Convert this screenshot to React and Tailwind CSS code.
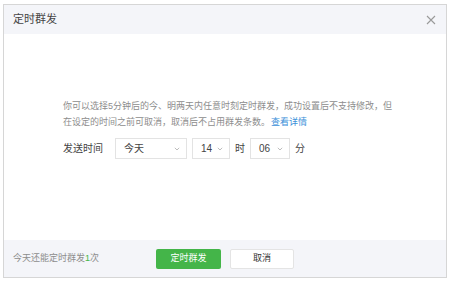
import React from 'react'

function Chevron() {
  return (
    <svg width="6" height="4" viewBox="0 0 6 4" className="shrink-0">
      <path d="M0.8 0.8 L3 3 L5.2 0.8" fill="none" stroke="#b5b5b5" strokeWidth="0.9" />
    </svg>
  )
}

function Select({ value, width }) {
  return (
    <div
      className={`flex h-[21px] items-center justify-between border border-[#e3e3e3] bg-white pl-[8px] pr-[6px] text-[10px] text-[#444] ${width}`}
    >
      <span>{value}</span>
      <Chevron />
    </div>
  )
}

export default function App() {
  return (
    <div
      className="h-[281px] w-[450px] bg-white pl-[3px] pt-[4px]"
      style={{ fontFamily: '"Liberation Sans","Noto Sans CJK SC",sans-serif' }}
    >
      <div className="flex h-[274px] w-[444px] flex-col border border-[#d6d6d6] bg-white">
        <div className="flex h-[29px] items-center justify-between bg-[#f4f5f9] pl-[9px] pr-[10px]">
          <span className="text-[11px] text-[#444]">定时群发</span>
          <svg width="10" height="10" viewBox="0 0 10 10">
            <path d="M1 1 L9 9 M9 1 L1 9" stroke="#9a9a9a" strokeWidth="1.1" />
          </svg>
        </div>

        <div className="flex-1 pl-[59px] pr-[50px] pt-[64px]">
          <p className="text-[9px] leading-[16px] text-[#8d8d8d]">
            你可以选择5分钟后的今、明两天内任意时刻定时群发，成功设置后不支持修改，但在设定的时间之前可取消，取消后不占用群发条数。
            <a className="ml-[1px] inline-block text-[#3b8fd9]">查看详情</a>
          </p>
          <div className="mt-[8px] flex items-center text-[10px] text-[#444]">
            <span className="w-[52px]">发送时间</span>
            <Select value="今天" width="w-[72px]" />
            <div className="ml-[5px]">
              <Select value="14" width="w-[38px]" />
            </div>
            <span className="mx-[5px]">时</span>
            <Select value="06" width="w-[40px]" />
            <span className="ml-[5px]">分</span>
          </div>
        </div>

        <div className="flex h-[37px] items-center bg-[#f4f5f9] pl-[9px]">
          <span className="w-[143px] text-[9px] text-[#8d8d8d]">
            今天还能定时群发<span className="text-[#44b549]">1</span>次
          </span>
          <button className="h-[20px] w-[65px] rounded-[2px] bg-[#44b549] text-[9px] text-white">
            定时群发
          </button>
          <button className="ml-[9px] h-[20px] w-[64px] rounded-[2px] border border-[#e4e4e4] bg-white text-[9px] text-[#333]">
            取消
          </button>
        </div>
      </div>
    </div>
  )
}
